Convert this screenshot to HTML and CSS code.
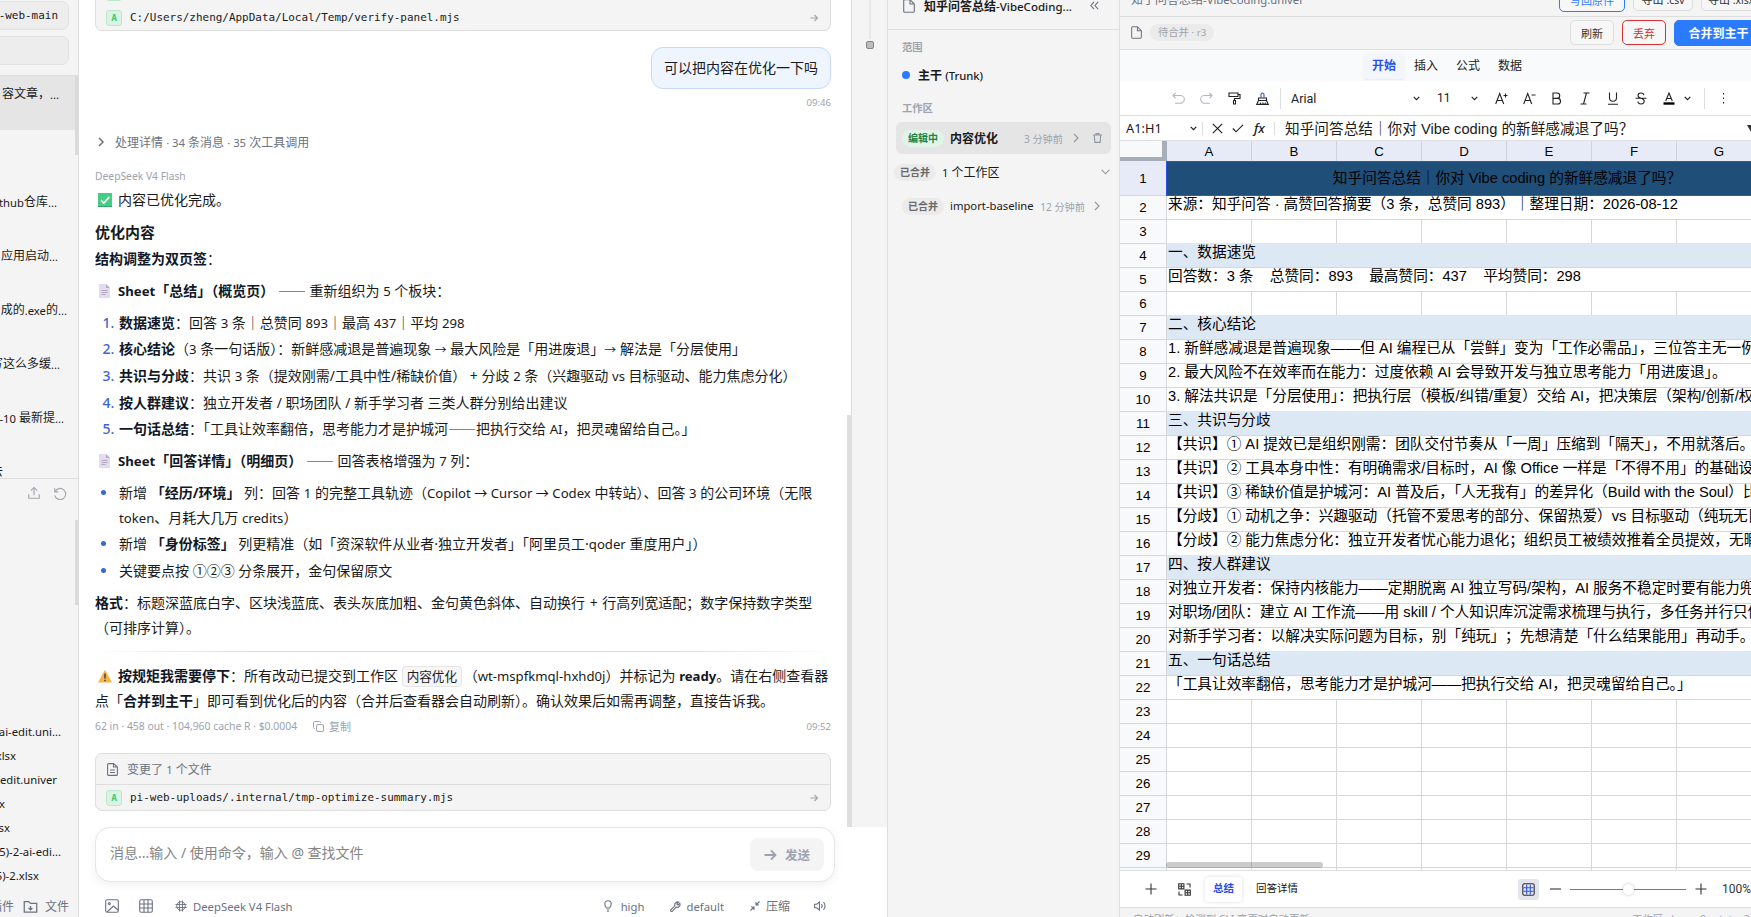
FILE: index.html
```
<!DOCTYPE html>
<html lang="zh-CN">
<head>
  <meta charset="UTF-8" />
  <meta name="viewport" content="width=device-width, initial-scale=1.0" />
  <title>知乎问答总结-VibeCoding.univer</title>
  <link rel="stylesheet" href="styles.css">
</head>
<body>
  <div class="app">

    <!-- 左侧边栏 -->
    <aside class="sidebar">
      <div class="side-top">
        <div class="side-box mono">-web-main</div>
        <div class="side-box"></div>
      </div>
      <div class="sessions">
        <div class="session active" style="padding-right:19px">容文章，<span class="en">...</span></div>
        <div class="session"></div>
        <div class="session" style="padding-right:21px"><span class="en">thub</span>仓库<span class="en">...</span></div>
        <div class="session" style="padding-right:20px">应用启动<span class="en">...</span></div>
        <div class="session" style="padding-right:11px">成的<span class="en">.exe</span>的<span class="en">...</span></div>
        <div class="session" style="padding-right:18px">写这么多缓<span class="en">...</span></div>
        <div class="session" style="padding-right:14px"><span class="en">-10&nbsp;</span>最新提<span class="en">...</span></div>
        <div class="session last" style="padding-right:75px">去</div>
        <i class="thumb"></i>
      </div>
      <div class="side-files">
        <div class="side-actions">
          <svg width="14" height="14" viewBox="0 0 24 24"><path d="M3 14v7h18v-7M12 16V3M6.500 8 12 2.500 17.500 8"/></svg>
          <svg width="14" height="14" viewBox="0 0 24 24"><path d="M3 4v6h6M3.500 10a9.500 9.500 0 1 1-.5 6"/></svg>
        </div>
        <div class="file-list">
          <div style="padding-right:17px">ai-edit.uni...</div>
          <div style="padding-right:62px">xlsx</div>
          <div style="padding-right:21px">-edit.univer</div>
          <div style="padding-right:73px">x</div>
          <div style="padding-right:68px">sx</div>
          <div style="padding-right:17px">5)-2-ai-edi...</div>
          <div style="padding-right:39px">5)-2.xlsx</div>
        </div>
        <i class="thumb"></i>
      </div>
      <div class="side-foot">
        <span>插件</span>
        <svg width="15" height="15" viewBox="0 0 24 24"><path d="M2 4h7l3 3h10v14H2zM12 11v6M9 14.500l3 3 3-3"/></svg>
        <span>文件</span>
      </div>
    </aside>

    <!-- 对话区 -->
    <main class="main">
      <div class="upper">
        <div class="chat">
          <div class="card card-top">
            <div class="card-row"><i class="tag"></i></div>
            <div class="card-row"><b class="tag">A</b><span class="mono">C:/Users/zheng/AppData/Local/Temp/verify-panel.mjs</span>
              <svg class="go" width="10" height="10" viewBox="0 0 10 10"><path d="M1.500 5h7M5.500 2l3 3-3 3"/></svg></div>
          </div>

          <div class="bubble">可以把内容在优化一下吗</div>
          <div class="time">09:46</div>

          <div class="details">
            <svg width="8" height="10" viewBox="0 0 8 10"><path d="M2 1l4 4-4 4"/></svg>
            <span>处理详情 <span class="en">· 34</span> 条消息 <span class="en">· 35</span> 次工具调用</span>
          </div>

          <div class="model">DeepSeek V4 Flash</div>

          <div class="md">
            <p class="first"><svg class="emoji" width="14" height="14" viewBox="0 0 14 14"><rect width="14" height="14" fill="#45cd83"/><path d="M0 13h14v1H0z" fill="#2fa868"/><path d="M3 7.200l2.800 2.800L11.200 4.200" stroke="#fff" stroke-width="1.700"/></svg>内容已优化完成。</p>
            <h3>优化内容</h3>
            <p class="tight"><b>结构调整为双页签</b>：</p>
            <p><svg class="emoji page" width="11" height="14" viewBox="0 0 11 14"><path d="M0 0h7l4 4v10H0z" fill="#e3dcee"/><path d="M7 0v4h4z" fill="#b9a9cf"/><path d="M2.500 6.500h6M2.500 8.500h6M2.500 10.500h4" stroke="#b3a8c2" stroke-width="1"/></svg><b><span class="en">Sheet</span>「总结」（概览页）</b> <span class="cjk">——</span> 重新组织为 <span class="en">5</span> 个板块：</p>
            <ol>
              <li><b>数据速览</b>：回答 <span class="en">3</span> 条｜总赞同 <span class="en">893</span>｜最高 <span class="en">437</span>｜平均 <span class="en">298</span></li>
              <li><b>核心结论</b>（<span class="en">3</span> 条一句话版）：新鲜感减退是普遍现象 <span class="arrow">→</span> 最大风险是「用进废退」<span class="arrow">→</span> 解法是「分层使用」</li>
              <li><b>共识与分歧</b>：共识 <span class="en">3</span> 条（提效刚需/工具中性/稀缺价值） + 分歧 <span class="en">2</span> 条（兴趣驱动 <span class="en">vs</span> 目标驱动、能力焦虑分化）</li>
              <li><b>按人群建议</b>：独立开发者 / 职场团队 / 新手学习者 三类人群分别给出建议</li>
              <li><b>一句话总结</b>：「工具让效率翻倍，思考能力才是护城河<span class="cjk">——</span>把执行交给 <span class="en">AI</span>，把灵魂留给自己。」</li>
            </ol>
            <p><svg class="emoji page" width="11" height="14" viewBox="0 0 11 14"><path d="M0 0h7l4 4v10H0z" fill="#e3dcee"/><path d="M7 0v4h4z" fill="#b9a9cf"/><path d="M2.500 6.500h6M2.500 8.500h6M2.500 10.500h4" stroke="#b3a8c2" stroke-width="1"/></svg><b><span class="en">Sheet</span>「回答详情」（明细页）</b> <span class="cjk">——</span> 回答表格增强为 <span class="en">7</span> 列：</p>
            <ul>
              <li>新增 <b>「经历/环境」</b> 列：回答 <span class="en">1</span> 的完整工具轨迹（<span class="en">Copilot → Cursor → Codex</span> 中转站）、回答 <span class="en">3</span> 的公司环境（无限<br><span class="en">token</span>、月耗大几万 <span class="en">credits</span>）</li>
              <li>新增 <b>「身份标签」</b> 列更精准（如「资深软件从业者·独立开发者」「阿里员工·<span class="en">qoder</span> 重度用户」）</li>
              <li>关键要点按 ①②③ 分条展开，金句保留原文</li>
            </ul>
            <p class="loose"><b>格式</b>：标题深蓝底白字、区块浅蓝底、表头灰底加粗、金句黄色斜体、自动换行 + 行高列宽适配；数字保持数字类型<br>（可排序计算）。</p>
            <hr>
            <p class="after-hr"><svg class="emoji" width="14" height="14" viewBox="0 0 14 14"><path d="M7 .8 14 13.500H0z" fill="#f9b347"/><path d="M7 4.500v5M7 10.800v1.500" stroke="#3b3b45" stroke-width="1.400"/></svg><b>按规矩我需要停下</b>：所有改动已提交到工作区 <code>内容优化</code> （<span class="en">wt-mspfkmql-hxhd0j</span>）并标记为 <b class="en">ready</b>。请在右侧查看器<br>点「<b>合并到主干</b>」即可看到优化后的内容（合并后查看器会自动刷新）。确认效果后如需再调整，直接告诉我。</p>
          </div>

          <div class="meta">
            <span class="usage">62 in · 458 out · 104,960 cache R · $0.0004</span>
            <svg width="11" height="11" viewBox="0 0 11 11"><rect x="3.500" y="3.500" width="7" height="7" rx="1.500"/><path d="M2 7.500H1.500a1 1 0 0 1-1-1v-5a1 1 0 0 1 1-1h5a1 1 0 0 1 1 1V2"/></svg>
            <span>复制</span>
            <span class="stamp">09:52</span>
          </div>

          <div class="card card-files">
            <div class="card-head">
              <svg width="11" height="13" viewBox="0 0 11 13"><path d="M.6 1.600a1 1 0 0 1 1-1h5L10.400 4v7.400a1 1 0 0 1-1 1H1.600a1 1 0 0 1-1-1zM6.500.6V4h3.900M3 7h5M3 9.500h5"/></svg>
              <span>变更了 <span class="en">1</span> 个文件</span>
            </div>
            <div class="card-row"><b class="tag">A</b><span class="mono">pi-web-uploads/.internal/tmp-optimize-summary.mjs</span>
              <svg class="go" width="10" height="10" viewBox="0 0 10 10"><path d="M1.500 5h7M5.500 2l3 3-3 3"/></svg></div>
          </div>
          <i class="chat-thumb"></i>
        </div>
        <div class="minimap"><i class="mm-line"></i><i class="mm-dot"></i></div>
      </div>

      <div class="composer">
        <div class="input-box">
          <span class="placeholder">消息...输入 / 使用命令，输入 @ 查找文件</span>
          <button class="send"><svg width="13" height="12" viewBox="0 0 13 12"><path d="M.5 6h11M7 1.500 11.500 6 7 10.500"/></svg>发送</button>
        </div>
        <div class="tools">
          <svg style="margin-right:20px" width="14" height="14" viewBox="0 0 14 14"><rect x=".7" y=".7" width="12.600" height="12.600" rx="1.500"/><circle cx="4.300" cy="4.500" r="1"/><path d="M2 13l6.500-6 5 4.500"/></svg>
          <svg style="margin-right:22px" width="14" height="14" viewBox="0 0 14 14"><rect x=".7" y=".7" width="12.600" height="12.600" rx="1.500"/><path d="M5 .7v12.600M9 .7v12.600M.7 5h12.600M.7 9h12.600"/></svg>
          <svg class="chip" style="margin-right:6px" width="12" height="12" viewBox="0 0 12 12"><circle cx="6" cy="6" r="4.300"/><path d="M4.500.5v11M7.500.5v11M.5 4.500h11M.5 7.500h11"/></svg>
          <span class="en12">DeepSeek V4 Flash</span>
          <span class="grow"></span>
          <svg style="margin-right:9px" width="8" height="12" viewBox="0 0 8 12"><path d="M2.500 8C1.500 7 .8 5.500.8 4a3.200 3.200 0 0 1 6.400 0c0 1.500-.7 3-1.700 4zM2.800 10h2.400M3.300 11.500h1.400"/></svg>
          <span class="en12" style="margin-right:26px">high</span>
          <svg style="margin-right:5px" width="11" height="11" viewBox="0 0 11 11"><path d="M9.800 2.300 8 4 6.800 3 8.600 1.100A2.900 2.900 0 0 0 4.900 4.800L.8 8.900a1 1 0 0 0 1.400 1.400l4.100-4.100a2.900 2.900 0 0 0 3.500-3.900z"/></svg>
          <span class="en12" style="margin-right:26px">default</span>
          <svg style="margin-right:6px" width="10" height="10" viewBox="0 0 10 10"><path d="M9.500.5 6 4M6 1v3h3M.5 9.500 4 6M1 6h3v3"/></svg>
          <span style="margin-right:24px">压缩</span>
          <svg width="12" height="10" viewBox="0 0 12 10"><path d="M.6 3.300h2L5.500 1v8L2.600 6.700h-2zM7.300 3a3 3 0 0 1 0 4M9.500 1.200a5.500 5.500 0 0 1 0 7.600"/></svg>
        </div>
      </div>
    </main>

    <!-- 工作区面板 -->
    <section class="panel">
      <div class="panel-head">
        <svg width="12" height="14" viewBox="0 0 12 14"><path d="M.7 1.700a1 1 0 0 1 1-1H7L11.300 5v7.300a1 1 0 0 1-1 1H1.700a1 1 0 0 1-1-1zM7 .7V5h4.300"/></svg>
        <span class="panel-title">知乎问答总结<span>-VibeCoding...</span></span>
        <svg class="fold" width="9" height="9" viewBox="0 0 9 9"><path d="M4 .8.9 4.500 4 8.200M8.100.8 5 4.500l3.100 3.700"/></svg>
      </div>
      <div class="label">范围</div>
      <div class="trunk"><i></i><b>主干 <span class="en">(Trunk)</span></b></div>
      <div class="label">工作区</div>
      <div class="ws ws-active"><span class="pill green">编辑中</span><b>内容优化</b><span class="ago">3 分钟前</span>
        <svg class="chev" width="6" height="10" viewBox="0 0 6 10"><path d="M1 1l4 4-4 4"/></svg>
        <svg class="trash" width="9" height="10" viewBox="0 0 9 10"><path d="M0 2h9M3 2V.6h3V2M1.300 2l.5 7.400h5.400L7.700 2"/></svg></div>
      <div class="ws ws-group"><span class="pill">已合并</span><span><span class="en">1</span> 个工作区</span>
        <svg class="down" width="9" height="6" viewBox="0 0 9 6"><path d="M.7.8l3.800 4 3.800-4"/></svg></div>
      <div class="ws ws-child"><span class="pill">已合并</span><span class="en">import-baseline</span><span class="ago">12 分钟前</span>
        <svg class="chev" width="6" height="10" viewBox="0 0 6 10"><path d="M1 1l4 4-4 4"/></svg></div>
    </section>

    <!-- 表格查看器 -->
    <section class="viewer">
      <div class="bar bar-file">
        <span class="file-name">知乎问答总结<span class="en">-VibeCoding.univer</span></span>
        <span class="grow"></span>
        <button class="btn primary-line">写回原件</button>
        <button class="btn">导出 <span class="en">.csv</span></button>
        <button class="btn">导出 <span class="en">.xlsx</span></button>
      </div>
      <div class="bar bar-merge">
        <svg width="11" height="13" viewBox="0 0 12 14"><path d="M.7 1.700a1 1 0 0 1 1-1H7L11.300 5v7.300a1 1 0 0 1-1 1H1.700a1 1 0 0 1-1-1zM7 .7V5h4.300"/></svg>
        <span class="rev">待合并 <span class="en">· r3</span></span>
        <span class="grow"></span>
        <button class="btn">刷新</button>
        <button class="btn danger">丢弃</button>
        <button class="btn solid">合并到主干</button>
      </div>

      <div class="ribbon">
        <span class="on">开始</span><span>插入</span><span>公式</span><span>数据</span>
      </div>

      <div class="toolbar">
        <svg class="off" style="margin-right:15px" width="13" height="13" viewBox="0 0 13 13"><path d="M3.500 1 1 3.500 3.500 6M1 3.500h7.500a3.800 3.800 0 0 1 0 7.700H3"/></svg>
        <svg class="off" style="margin-right:15px" width="13" height="13" viewBox="0 0 13 13"><path d="M9.500 1 12 3.500 9.500 6M12 3.500H4.500a3.800 3.800 0 0 0 0 7.700H10"/></svg>
        <svg style="margin-right:15px" width="13" height="13" viewBox="0 0 13 13"><path d="M1 1h9v3.500H1zM10 2.500h2v4H6.500v2M5.500 8.500h2V12h-2z"/></svg>
        <svg style="margin-right:11px" width="13" height="13" viewBox="0 0 13 13"><path d="M2.500 6h8v2.500h-8zM2.500 8.500.8 12.400h11.400L10.500 8.500M4.500 12.500V10.500M7 12.500V10.500M9.300 12.500V10.500"/><path d="M5 6V2.500a1.500 1.500 0 0 1 3 0V6" stroke="#2f56ee"/></svg>
        <i class="sep"></i>
        <span class="font">Arial</span>
        <svg class="dd" style="margin-right:17px" width="7" height="5" viewBox="0 0 7 5"><path d="M.7.8l2.800 2.900L6.300.8"/></svg>
        <span class="size">11</span>
        <svg class="dd" style="margin-right:17px" width="7" height="5" viewBox="0 0 7 5"><path d="M.7.8l2.800 2.900L6.300.8"/></svg>
        <svg style="margin-right:15px" width="13" height="13" viewBox="0 0 13 13"><path d="M.7 12 4.700 1.500 8.700 12M2.200 8.500h5M8.500 3.500h4M10.500 1.500v4"/></svg>
        <svg style="margin-right:15px" width="13" height="13" viewBox="0 0 13 13"><path d="M.7 12 4.700 1.500 8.700 12M2.200 8.500h5M8.500 3h4"/></svg>
        <svg style="margin-right:17px" width="11" height="13" viewBox="0 0 11 13"><path d="M2 1h4a2.600 2.600 0 0 1 0 5.400H2zM2 6.400h4.700a2.800 2.800 0 0 1 0 5.600H2z"/></svg>
        <svg style="margin-right:16px" width="12" height="13" viewBox="0 0 12 13"><path d="M4.500 1h6M1.500 12h6M7.500 1l-3 11"/></svg>
        <svg style="margin-right:16px" width="12" height="13" viewBox="0 0 12 13"><path d="M2.500.5v5.300a3.500 3.500 0 0 0 7 0V.5M1 12.300h10"/></svg>
        <svg style="margin-right:16px" width="12" height="13" viewBox="0 0 12 13"><path d="M9 3.200C8.700 1.800 7.500 1 6 1 4.300 1 3 2 3 3.500 3 5 4.300 5.700 6 6.200s3.200 1.300 3.200 2.900S7.800 12 6 12s-3-1-3.200-2.500M.5 6.300h11"/></svg>
        <svg style="margin-right:9px" width="12" height="13" viewBox="0 0 12 13"><path d="M2.700 9 6 1l3.300 8M3.800 6.500h4.400"/><path d="M.5 11.500h11" stroke="#000" stroke-width="2.400"/></svg>
        <svg class="dd" style="margin-right:13px" width="7" height="5" viewBox="0 0 7 5"><path d="M.7.8l2.800 2.900L6.300.8"/></svg>
        <i class="sep"></i>
        <svg width="3" height="12" viewBox="0 0 3 12" style="margin-left:17px"><path d="M1.500 1v1.400M1.500 5.500v1.400M1.500 10v1.400"/></svg>
      </div>

      <div class="formula">
        <span class="ref">A1:H1</span>
        <svg class="dd" style="margin-right:5px" width="7" height="5" viewBox="0 0 7 5"><path d="M.7.8l2.800 2.900L6.300.8"/></svg>
        <i class="sep"></i>
        <svg style="margin:0 9px" width="11" height="11" viewBox="0 0 11 11"><path d="M.8.8l9.400 9.400M10.200.8.8 10.200"/></svg>
        <svg style="margin-right:10px" width="12" height="9" viewBox="0 0 12 9"><path d="M.8 4.500 4 7.800 11 .8"/></svg>
        <em class="fx">fx</em>
        <i class="sep"></i>
        <span class="formula-text">知乎问答总结｜你对 Vibe coding 的新鲜感减退了吗？</span>
        <i class="tri"></i>
      </div>

      <div class="sheet">
        <div class="cols"><i class="corner"></i><span>A</span><span>B</span><span>C</span><span>D</span><span>E</span><span>F</span><span>G</span></div>
        <div class="row title"><span class="num">1</span><div class="cells"><span>知乎问答总结｜你对 Vibe coding 的新鲜感减退了吗？</span></div></div>
        <div class="row"><span class="num">2</span><div class="cells">来源：知乎问答 · 高赞回答摘要（3 条，总赞同 893）｜整理日期：2026-08-12</div></div>
        <div class="row"><span class="num">3</span><div class="cells grid"></div></div>
        <div class="row"><span class="num">4</span><div class="cells fill">一、数据速览</div></div>
        <div class="row"><span class="num">5</span><div class="cells">回答数：3 条&nbsp;&nbsp;&nbsp;&nbsp;总赞同：893&nbsp;&nbsp;&nbsp;&nbsp;最高赞同：437&nbsp;&nbsp;&nbsp;&nbsp;平均赞同：298</div></div>
        <div class="row"><span class="num">6</span><div class="cells grid"></div></div>
        <div class="row"><span class="num">7</span><div class="cells fill">二、核心结论</div></div>
        <div class="row"><span class="num">8</span><div class="cells">1. 新鲜感减退是普遍现象——但 AI 编程已从「尝鲜」变为「工作必需品」，三位答主无一例</div></div>
        <div class="row"><span class="num">9</span><div class="cells">2. 最大风险不在效率而在能力：过度依赖 AI 会导致开发与独立思考能力「用进废退」。</div></div>
        <div class="row"><span class="num">10</span><div class="cells">3. 解法共识是「分层使用」：把执行层（模板/纠错/重复）交给 AI，把决策层（架构/创新/权</div></div>
        <div class="row"><span class="num">11</span><div class="cells fill">三、共识与分歧</div></div>
        <div class="row"><span class="num">12</span><div class="cells">【共识】① AI 提效已是组织刚需：团队交付节奏从「一周」压缩到「隔天」，不用就落后。</div></div>
        <div class="row"><span class="num">13</span><div class="cells">【共识】② 工具本身中性：有明确需求/目标时，AI 像 Office 一样是「不得不用」的基础设</div></div>
        <div class="row"><span class="num">14</span><div class="cells">【共识】③ 稀缺价值是护城河：AI 普及后，「人无我有」的差异化（Build with the Soul）比</div></div>
        <div class="row"><span class="num">15</span><div class="cells">【分歧】① 动机之争：兴趣驱动（托管不爱思考的部分、保留热爱）vs 目标驱动（纯玩无目</div></div>
        <div class="row"><span class="num">16</span><div class="cells">【分歧】② 能力焦虑分化：独立开发者忧心能力退化；组织员工被绩效推着全员提效，无暇</div></div>
        <div class="row"><span class="num">17</span><div class="cells fill">四、按人群建议</div></div>
        <div class="row"><span class="num">18</span><div class="cells">对独立开发者：保持内核能力——定期脱离 AI 独立写码/架构，AI 服务不稳定时要有能力兜</div></div>
        <div class="row"><span class="num">19</span><div class="cells">对职场/团队：建立 AI 工作流——用 skill / 个人知识库沉淀需求梳理与执行，多任务并行只做</div></div>
        <div class="row"><span class="num">20</span><div class="cells">对新手学习者：以解决实际问题为目标，别「纯玩<span class="wide">」；</span>先想清楚「什么结果能用」再动手。</div></div>
        <div class="row"><span class="num">21</span><div class="cells fill">五、一句话总结</div></div>
        <div class="row"><span class="num">22</span><div class="cells">「工具让效率翻倍，思考能力才是护城河——把执行交给 AI，把灵魂留给自己。」</div></div>
        <div class="row"><span class="num">23</span><div class="cells grid"></div></div>
        <div class="row"><span class="num">24</span><div class="cells grid"></div></div>
        <div class="row"><span class="num">25</span><div class="cells grid"></div></div>
        <div class="row"><span class="num">26</span><div class="cells grid"></div></div>
        <div class="row"><span class="num">27</span><div class="cells grid"></div></div>
        <div class="row"><span class="num">28</span><div class="cells grid"></div></div>
        <div class="row"><span class="num">29</span><div class="cells grid"></div></div>
        <div class="row"><span class="num"></span><div class="cells grid"></div></div>
        <i class="hscroll"></i>
      </div>

      <div class="sheet-bar">
        <svg style="margin-right:21px" width="12" height="12" viewBox="0 0 12 12"><path d="M6 .5v11M.5 6h11"/></svg>
        <svg style="margin-right:14px" width="13" height="13" viewBox="0 0 13 13"><path d="M.7.7h5.200v5.200H.7zM3.300.7v5.200M.7 3.300h5.200M7.100 7.100h5.200v5.200H7.100zM9.700 7.100v5.200M7.100 9.700h5.200M8.500 1h3.500v3.500M4.500 12H1V8.500"/></svg>
        <span class="tab on">总结</span>
        <span class="tab">回答详情</span>
        <span class="grow"></span>
        <span class="grid-btn"><svg width="13" height="13" viewBox="0 0 13 13"><path d="M4.700 1.500v10M8.300 1.500v10M1.500 4.700h10M1.500 8.300h10" stroke="#2f56ee"/><rect x=".8" y=".8" width="11.400" height="11.400" rx="1.500"/></svg></span>
        <svg width="11" height="12" viewBox="0 0 11 12"><path d="M0 6h11"/></svg>
        <span class="slider"><i></i></span>
        <svg width="12" height="12" viewBox="0 0 12 12"><path d="M6 .5v11M.5 6h11"/></svg>
        <span class="zoom">100%</span>
      </div>

      <div class="status"><span>自动刷新：检测到 CLI 变更时自动更新</span><span class="grow"></span><span class="status-r">工作区 · base: 0 · state: 3</span></div>
    </section>
  </div>
</body>
</html>
```

FILE: styles.css
```
* {
  box-sizing: border-box;
}

body {
  margin: 0;
  background: #fff;
  color: #1a1a1a;
  font-family: "Noto Sans", "Noto Sans CJK SC", sans-serif;
  font-size: 12px;
  white-space: nowrap;
  overflow: hidden;
}

svg {
  flex: none;
  fill: none;
  stroke: currentColor;
  stroke-width: 1.1;
}

button {
  font-family: inherit;
  flex: none;
}

/* latin runs sit a little smaller next to CJK text */
.en {
  font-size: 0.94em;
  line-height: 1;
}

.en12 {
  font-size: 11.3px;
}

.cjk {
  font-family: "Noto Sans CJK SC", sans-serif;
  line-height: 1;
}

.arrow {
  font-size: 0.85em;
  line-height: 1;
}

.wide {
  text-spacing-trim: space-all;
}

.mono {
  font-family: "DejaVu Sans Mono", monospace;
  font-size: 10.96px;
}

.grow {
  flex: 1;
}

.app {
  display: flex;
  width: 1751px;
  height: 917px;
  overflow: hidden;
}

/* ---------- sidebar ---------- */
.sidebar {
  flex: none;
  width: 79px;
  height: 917px;
  display: flex;
  flex-direction: column;
  background: #f4f4f4;
  border-right: 1px solid #dedede;
  overflow: hidden;
}

.sidebar > div {
  flex: none;
}

.side-top {
  height: 76px;
  padding: 1px 9px 0 0;
  border-bottom: 1px solid #dedede;
}

.side-box {
  display: flex;
  align-items: center;
  justify-content: flex-end;
  height: 29px;
  margin: 0 0 6px -10px;
  padding-right: 10px;
  background: #ededed;
  border: 1px solid #e2e2e2;
  border-radius: 7px;
}

.sessions,
.side-files {
  position: relative;
}

.sessions {
  height: 403px;
  border-bottom: 1px solid #dedede;
  overflow: hidden;
}

.session {
  display: flex;
  justify-content: flex-end;
  height: 54px;
  line-height: 36px;
}

.session .en {
  line-height: 37px;
}

.session.active {
  background: #e5e5e5;
}

.thumb {
  position: absolute;
  right: 0;
  top: 0;
  width: 3px;
  height: 79px;
  background: #dadada;
}

.side-files {
  height: 410px;
}

.side-files .thumb {
  top: 41px;
  height: 85px;
}

.side-actions {
  display: flex;
  justify-content: flex-end;
  gap: 12px;
  padding: 7px 11px 0 0;
  height: 241px;
  color: #a2a7b0;
}

.side-actions svg {
  stroke-width: 2;
}

.file-list div {
  display: flex;
  justify-content: flex-end;
  height: 24px;
  line-height: 24px;
  font-size: 11.3px;
}

.side-foot {
  display: flex;
  align-items: center;
  justify-content: flex-end;
  height: 34px;
  padding-right: 9px;
  color: #6b7280;
}

.side-foot svg {
  margin: 0 7px 0 9px;
  stroke-width: 2;
}

/* ---------- chat ---------- */
.main {
  flex: none;
  width: 808px;
  display: flex;
  flex-direction: column;
}

.upper {
  flex: none;
  display: flex;
  height: 827px;
}

.chat {
  position: relative;
  width: 773px;
  padding: 0 20px 0 16px;
  border-right: 1px solid #dedede;
  overflow: hidden;
}

.chat-thumb {
  position: absolute;
  right: -1px;
  top: 415px;
  width: 5px;
  height: 412px;
  background: #dedede;
}

.card {
  background: #f4f4f4;
  border: 1px solid #dedede;
  border-radius: 7px;
}

.card-top {
  height: 31px;
  border-top: none;
  border-radius: 0 0 7px 7px;
  display: flex;
  flex-direction: column;
  justify-content: flex-end;
}

.card-row {
  flex: none;
  display: flex;
  align-items: center;
  height: 25px;
  padding: 0 11px 0 10px;
}

.tag {
  width: 16px;
  height: 16px;
  margin-right: 8px;
  border: 1px solid #b9e8ca;
  border-radius: 3px;
  background: #dcf3e4;
  color: #3fc873;
  font: bold 9.5px/14px "DejaVu Sans Mono", monospace;
  text-align: center;
}

.go {
  margin-left: auto;
  color: #9ca3af;
}

.bubble {
  width: 180px;
  height: 42px;
  margin: 16px 0 0 auto;
  background: #eff5ff;
  border: 1px solid #c5dafb;
  border-radius: 12px;
  font-size: 14px;
  line-height: 39px;
  text-align: center;
}

.time {
  margin-top: 7px;
  height: 14px;
  line-height: 14px;
  font-size: 9.6px;
  color: #9ca3af;
  text-align: right;
}

.details {
  display: flex;
  align-items: center;
  height: 20px;
  margin-top: 22px;
  padding-left: 2px;
  color: #6b7280;
}

.details svg {
  margin-right: 10px;
  stroke-width: 1.5;
}

.model {
  margin-top: 16px;
  height: 16px;
  line-height: 16px;
  font-size: 10.3px;
  color: #9ca3af;
}

.md {
  font-size: 14px;
  line-height: 24.5px;
}

.md p {
  margin: 7.5px 0 0;
}

.md p.first {
  margin-top: 4px;
  height: 24px;
}

.md p.tight {
  margin-top: 3px;
}

.md p.loose {
  word-spacing: 1px;
}

.md h3 {
  margin: 7.5px 0 0;
  font-size: 15px;
  line-height: 24px;
}

.md b {
  font-weight: 700;
  color: #111827;
}

.md .emoji {
  margin: 0 6px 0 3px;
  stroke: none;
  vertical-align: -2px;
}

.md .page {
  margin: 0 8px 0 4px;
}

.md ol,
.md ul {
  margin: 7.5px 0 0;
  padding: 0 0 0 23px;
}

.md li {
  padding-left: 1px;
}

.md li + li {
  margin-top: 2.2px;
}

.md li::marker {
  color: #3b66d1;
  font-weight: 500;
}

.md hr {
  height: 1px;
  margin: 11px 0 0;
  border: none;
  background: linear-gradient(90deg, transparent, #dedede 20%, #dedede 80%, transparent);
}

.md p.after-hr {
  margin-top: 12px;
}

.md code {
  margin-right: -2px;
  padding: 1px 4px;
  border: 1px solid #e5e5e5;
  border-radius: 4px;
  background: #f7f7f7;
  font-family: inherit;
  font-size: 12.6px;
  line-height: 1;
}

.meta {
  display: flex;
  align-items: center;
  height: 16px;
  margin-top: 5px;
  font-size: 11px;
  color: #9ca3af;
}

.usage {
  font-size: 10.4px;
  margin-right: 16px;
}

.meta svg {
  margin-right: 5px;
  stroke-width: 1;
}

.stamp {
  margin-left: auto;
  font-size: 9.6px;
}

.card-files {
  margin-top: 19px;
  height: 58px;
}

.card-head {
  display: flex;
  align-items: center;
  height: 31px;
  padding-left: 11px;
  border-bottom: 1px solid #dedede;
  color: #6b7280;
}

.card-head svg {
  margin-right: 9px;
}

.minimap {
  position: relative;
  width: 35px;
  background: #f4f4f4;
}

.mm-line {
  position: absolute;
  left: 17px;
  top: 0;
  width: 2px;
  height: 39px;
  background: #e8e8e8;
}

.mm-dot {
  position: absolute;
  left: 14px;
  top: 41px;
  width: 8px;
  height: 8px;
  border: 1px solid #858585;
  border-radius: 2px;
  background: #bdbdbd;
}

.composer {
  padding: 0 52px 0 16px;
}

.input-box {
  display: flex;
  align-items: center;
  height: 55px;
  padding: 0 10px 0 14px;
  border: 1px solid #e6e6e6;
  border-radius: 15px;
  background: #fff;
  box-shadow: 0 3px 10px rgba(0, 0, 0, 0.06);
}

.placeholder {
  flex: 1;
  padding-bottom: 5px;
  font-size: 14px;
  color: #858585;
}

.send {
  display: flex;
  align-items: center;
  gap: 8px;
  width: 74px;
  height: 33px;
  padding: 0 0 0 14px;
  border: none;
  border-radius: 8px;
  background: #f4f4f4;
  color: #9ca3af;
  font-size: 12.5px;
  font-weight: 700;
}

.send svg {
  stroke-width: 1.8;
}

.tools {
  display: flex;
  align-items: center;
  height: 34px;
  margin-top: 7px;
  padding: 0 9px 0 10px;
  color: #6b7280;
}

.chip {
  stroke-width: 0.9;
}

/* ---------- workspace panel ---------- */
.panel {
  flex: none;
  width: 233px;
  background: #f4f4f4;
  border-left: 1px solid #dedede;
  border-right: 1px solid #dedede;
}

.panel-head {
  display: flex;
  align-items: center;
  height: 30px;
  margin-bottom: 7px;
  padding: 0 20px 18px 15px;
  border-bottom: 1px solid #dedede;
  color: #6b7280;
}

.panel-title {
  margin-left: 9px;
  font-weight: 600;
  color: #1a1a1a;
}

.panel-title span {
  font-size: 11.5px;
  font-weight: 500;
}

.fold {
  margin-left: auto;
}

.label {
  height: 20px;
  padding-left: 14px;
  line-height: 20px;
  font-size: 10.3px;
  font-weight: 600;
  color: #9ca3af;
}

.trunk {
  display: flex;
  align-items: center;
  height: 32px;
  margin: 2px 0 7px;
  padding-left: 14px;
}

.trunk i {
  width: 8px;
  height: 8px;
  margin-right: 8px;
  border-radius: 50%;
  background: #2b7bff;
}

.trunk b {
  font-weight: 600;
}

.trunk .en {
  font-weight: 500;
}

.ws {
  display: flex;
  align-items: center;
  height: 32px;
  margin: 0 8px;
  padding: 0 6px;
}

.ws-active {
  margin-top: 4px;
  border-radius: 6px;
  background: #e5e5e5;
}

.ws-group {
  height: 36px;
  padding: 0 1px 0 0;
  margin-left: 6px;
}

.ws-child {
  height: 32px;
}

.pill {
  flex: none;
  width: 42px;
  height: 17px;
  margin-right: 6px;
  border-radius: 9px;
  background: #ebebeb;
  color: #6a6a6a;
  font-size: 10px;
  font-weight: 600;
  line-height: 17px;
  text-align: center;
}

.pill.green {
  background: #e0f5e8;
  color: #1c8549;
}

.ago {
  margin-left: auto;
  margin-right: 10px;
  font-size: 10.2px;
  color: #9ca3af;
}

.chev,
.trash,
.down {
  color: #9095a0;
}

.trash {
  margin: 0 3px 0 14px;
}

.down {
  margin-left: auto;
}

.ws-child .ago {
  margin-right: 9px;
}

.ws-child .chev {
  margin-right: 5px;
}

/* ---------- viewer ---------- */
.viewer {
  flex: 1;
  min-width: 0;
  display: flex;
  flex-direction: column;
  overflow: hidden;
}

.bar {
  flex: none;
  display: flex;
  align-items: center;
  background: #f4f4f4;
  border-bottom: 1px solid #dedede;
  overflow: hidden;
}

.bar-file {
  height: 17px;
  padding-left: 11px;
  align-items: flex-end;
  gap: 8px;
  margin-right: -10px;
}

.file-name {
  height: 24px;
  line-height: 16px;
  color: #6b7280;
}

.bar-merge {
  height: 33px;
  padding: 0 0 1px 11px;
  gap: 8px;
  margin-right: -12px;
  color: #6b7280;
}

.btn {
  height: 25px;
  padding: 0 10px;
  border: 1px solid #dcdcdc;
  border-radius: 5px;
  background: #f7f7f7;
  color: #333;
  font-size: 11px;
}

.bar-file .btn {
  margin-bottom: 5px;
  width: 60px;
  padding: 0;
}

.bar-file .btn.primary-line {
  width: 66px;
  margin-bottom: 4px;
  border-color: #2b7bff;
  color: #2b7bff;
}

.btn.danger {
  border-color: #dc2f2f;
  color: #dc2f2f;
}

.btn.solid {
  height: 26px;
  width: 89px;
  border-color: #2b7bff;
  background: #2b7bff;
  color: #fff;
  font-size: 12px;
  font-weight: 700;
}

.rev {
  height: 17px;
  padding: 0 8px;
  border-radius: 9px;
  background: #ebebeb;
  color: #a0a4ac;
  font-size: 10.3px;
  line-height: 17px;
}

.ribbon {
  flex: none;
  display: flex;
  align-items: center;
  height: 31px;
  padding-left: 244px;
  background: #f9fafc;
}

.ribbon span {
  height: 26px;
  margin-right: 2px;
  padding: 0 8px;
  line-height: 25px;
  color: #222;
}

.ribbon .on {
  border-radius: 3px;
  background: #f4f6fe;
  box-shadow: 0 1px 2px rgba(0, 0, 0, 0.08);
  color: #274fee;
  font-weight: 700;
}

.toolbar,
.formula {
  flex: none;
  display: flex;
  align-items: center;
  border-bottom: 1px solid #dedfe2;
  background: #fff;
}

.toolbar {
  height: 35px;
  padding-left: 52px;
  color: #222;
}

.off {
  color: #b3b7c2;
}

.sep {
  width: 1px;
  height: 21px;
  background: #dcdee2;
}

.font {
  width: 122px;
  margin-left: 10px;
  font: 12.5px "Roboto", sans-serif;
}

.size {
  width: 34px;
  font: 12px "Roboto", sans-serif;
}

.formula {
  height: 25px;
  padding-left: 6px;
}

.formula .sep {
  height: 13px;
}

.ref {
  width: 64px;
  font-size: 12.8px;
}

.fx {
  width: 20px;
  font: italic 500 13px "Noto Sans", sans-serif;
}

.formula-text {
  margin-left: 10px;
  padding-bottom: 2px;
}

.formula-text,
.sheet {
  font-family: "Liberation Sans", "Noto Sans CJK SC", sans-serif;
  font-size: 14.67px;
}

.tri {
  width: 0;
  height: 0;
  margin-left: auto;
  margin-right: -4px;
  border: 4.5px solid transparent;
  border-top: 7px solid #333;
  border-bottom: none;
}

.sheet {
  flex: none;
  position: relative;
  height: 729px;
  overflow: hidden;
  color: #000;
}

.cols {
  display: flex;
  height: 20px;
}

.cols span {
  flex: none;
  width: 85px;
  border-right: 1px solid #cfd3de;
  background: #e7ebf8;
  font-size: 13.3px;
  line-height: 21px;
  text-align: center;
}

.corner {
  flex: none;
  width: 47px;
  border-right: 5px solid #a6aeba;
  border-bottom: 4px solid #a6aeba;
  background: #f8f9fb;
}

.row {
  display: flex;
  height: 24px;
}

.num {
  flex: none;
  width: 47px;
  border-right: 1px solid #d5d7db;
  border-bottom: 1px solid #d5d7db;
  background: #f8f9fb;
  font-size: 13.3px;
  line-height: 24px;
  text-align: center;
}

.cells {
  flex: 1;
  min-width: 0;
  padding-left: 1px;
  border-bottom: 1px solid #d5d7db;
  line-height: 17px;
}

.grid {
  background: repeating-linear-gradient(90deg, transparent 0 84px, #d5d7db 84px 85px);
}

.fill {
  background: #dce9f5;
  box-shadow: 0 -1px 0 #dce9f5;
}

.title {
  height: 35px;
}

.title .num {
  background: #e7ebf8;
  line-height: 35px;
}

.title .cells {
  display: flex;
  justify-content: center;
  flex: none;
  width: 681px;
  margin-left: -1px;
  border: 1px solid #2a52e8;
  background: #1f4e79;
  line-height: 33px;
}

.hscroll {
  position: absolute;
  left: 46px;
  top: 721px;
  width: 157px;
  height: 6px;
  border-radius: 3px;
  background: rgba(0, 0, 0, 0.2);
}

.sheet-bar {
  flex: none;
  display: flex;
  align-items: center;
  height: 38px;
  padding-left: 25px;
  border-top: 1px solid #dedfe2;
  border-bottom: 1px solid #dedede;
  color: #333;
}

.tab {
  height: 25px;
  padding: 0 7px;
  margin-right: 7px;
  line-height: 22px;
  font-size: 10.5px;
  color: #111;
}

.tab.on {
  padding: 0 8px;
  border-radius: 4px;
  box-shadow: 0 0 4px rgba(0, 0, 0, 0.13);
  color: #274fee;
  font-weight: 700;
}

.grid-btn {
  display: flex;
  align-items: center;
  justify-content: center;
  width: 21px;
  height: 21px;
  margin-right: 11px;
  border-radius: 3px;
  background: #e3e5ec;
}

.slider {
  position: relative;
  width: 116px;
  height: 1px;
  margin: 0 9px;
  background: #6f7a90;
}

.slider i {
  position: absolute;
  left: 53px;
  top: -5px;
  width: 11px;
  height: 11px;
  border-radius: 50%;
  background: #fff;
  box-shadow: 0 0 3px rgba(0, 0, 0, 0.25);
}

.zoom {
  width: 29px;
  margin-left: 15px;
  font: 12px "Roboto", sans-serif;
}

.status {
  flex: 1;
  display: flex;
  padding: 3px 0 0 13px;
  background: #f4f4f4;
  color: #9ca3af;
  font-size: 10.4px;
  line-height: 16px;
}

.status-r {
  width: 119px;
}
```
